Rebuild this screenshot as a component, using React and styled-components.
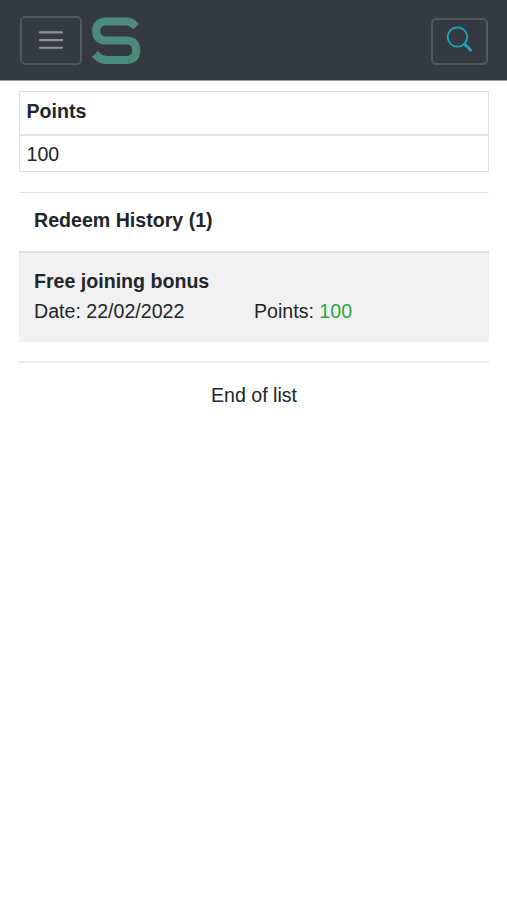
import React from "react";
import styled, { createGlobalStyle } from "styled-components";

const GlobalStyle = createGlobalStyle`
  *, *::before, *::after { box-sizing: border-box; }
  body {
    margin: 0;
    background: #fff;
    color: #212529;
    font: 19.6px/29.4px "Liberation Sans", Arial, sans-serif;
  }
`;

const Header = styled.header`
  display: flex;
  align-items: flex-start;
  height: 81px;
  padding: 16px 19px 0 20px;
  background: #343a40;
  border-bottom: 1px solid #96989a;
`;

const OutlineButton = styled.button`
  display: flex;
  justify-content: center;
  width: ${({ $width }) => $width}px;
  height: ${({ $height }) => $height}px;
  margin: ${({ $top }) => $top}px 0 0;
  padding: ${({ $inset = 0 }) => $inset}px 0 0;
  background: transparent;
  border: 2px solid #53585d;
  border-radius: 5px;
`;

const Brand = styled.a`
  display: flex;
  margin: 0 auto 0 9px;
`;

const Icon = styled.svg`
  display: block;
  flex: none;
  fill: none;
`;

const Main = styled.main`
  padding: 10px 18px 0 19px;
`;

const PointsTable = styled.table`
  width: 100%;
  border-collapse: separate;
  border-spacing: 0;
  border: 1px solid #dee2e6;
  text-align: left;
`;

const HeadCell = styled.th`
  height: 44px;
  padding: 0 7px 2px 6.5px;
  border-bottom: 2px solid #dee2e6;
  font-weight: 700;
`;

const Cell = styled.td`
  height: 35px;
  padding: 2px 7px 0 6.5px;
`;

const History = styled.section`
  margin-top: 20px;
  border-top: 1px solid #e2e4e6;
`;

const HistoryTitle = styled.h2`
  height: 60px;
  margin: 0;
  padding: 13px 15px 0;
  border-bottom: 2px solid #dee2e6;
  font-size: inherit;
  font-weight: 700;
`;

const Entry = styled.article`
  display: grid;
  grid-template-columns: 1fr 1fr;
  row-gap: 0.6px;
  height: 89px;
  padding: 14px 0;
  background: #f1f1f1;
  align-content: start;
`;

const EntryTitle = styled.strong`
  grid-column: 1 / -1;
  padding: 0 15px;
`;

const Detail = styled.span`
  padding-left: 15px;
  & + & { padding-left: 0; }
`;

const Amount = styled.span`
  color: #28a745;
`;

const ListEnd = styled.footer`
  margin-top: 19px;
  padding-top: 18px;
  border-top: 2px solid #ececec;
  text-align: center;
`;

export default function App() {
  return (
    <>
      <GlobalStyle />
      <Header>
        <OutlineButton $width={62} $height={49} $top={0} aria-label="Menu">
          <Icon width="30" height="45" viewBox="0 0 30 45" stroke="#8f9396" strokeWidth="2.1" strokeLinecap="round">
            <path d="M4 14.4H26M4 22.1H26M4 29.8H26" />
          </Icon>
        </OutlineButton>
        <Brand aria-label="Home">
          <Icon width="51" height="50" viewBox="91 16 51 50" stroke="#4a8b7a" strokeWidth="8.2">
            <path d="M136.1 26.8L135 25.6C132.2 22.5 130 21.5 126.5 21.5H106C99.5 21.5 96.2 25 96.2 31S99.5 40.5 106 40.5H126.5C133 40.5 136.2 44 136.2 50.2S133 60 126.5 60H106.5C102.5 60 100 59 97.2 56L95 53.8" />
          </Icon>
        </Brand>
        <OutlineButton $width={57} $height={47} $top={2} $inset={5} aria-label="Search">
          <Icon width="28" height="28" viewBox="445.5 24.5 28 28" stroke="#20a3b8">
            <circle cx="457" cy="36.5" r="9.7" strokeWidth="1.8" />
            <path d="M464.3 43.8L470 49.5" strokeWidth="3.1" strokeLinecap="round" />
          </Icon>
        </OutlineButton>
      </Header>
      <Main>
        <PointsTable>
          <thead>
            <tr><HeadCell>Points</HeadCell></tr>
          </thead>
          <tbody>
            <tr><Cell>100</Cell></tr>
          </tbody>
        </PointsTable>
        <History>
          <HistoryTitle>Redeem History (1)</HistoryTitle>
          <Entry>
            <EntryTitle>Free joining bonus</EntryTitle>
            <Detail>Date: 22/02/2022</Detail>
            <Detail>Points: <Amount>100</Amount></Detail>
          </Entry>
        </History>
        <ListEnd>End of list</ListEnd>
      </Main>
    </>
  );
}
